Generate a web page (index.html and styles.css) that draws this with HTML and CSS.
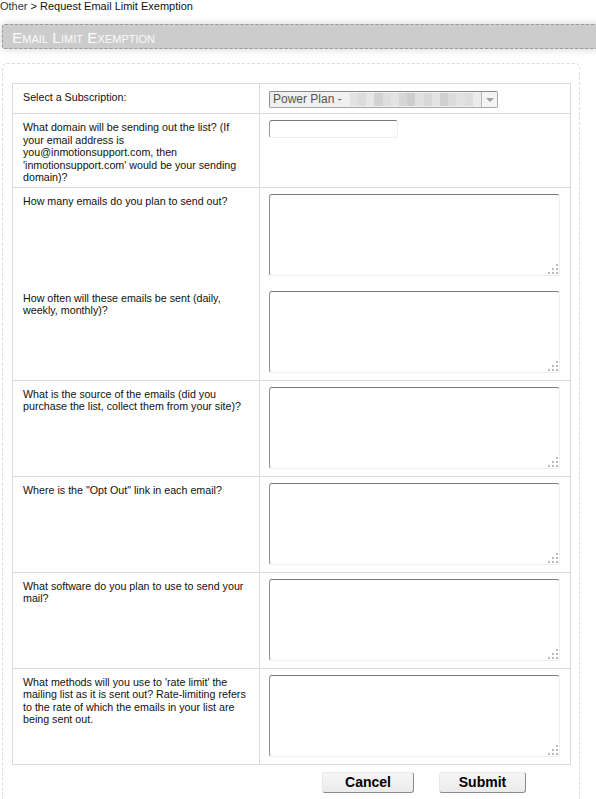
FILE: index.html
```html
<!DOCTYPE html>
<html>
<head>
<meta charset="utf-8">
<title>Email Limit Exemption</title>
<link rel="stylesheet" href="styles.css">
</head>
<body>
<div class="crumbs"><span class="crumb-parent">Other</span> &gt; Request Email Limit Exemption</div>
<div class="titlebar"><h1 class="title">Email Limit Exemption</h1></div>
<div class="panel">
  <table class="form">
    <tr>
      <td class="q">Select a Subscription:</td>
      <td class="a a-select">
        <div class="select">
          <span class="select-text">Power Plan -</span>
          <span class="blur">
            <i class="b1"></i><i class="b2"></i><i class="b3"></i><i class="b4"></i><i class="b5"></i><i class="b6"></i><i class="b7"></i><i class="b8"></i><i class="b9"></i><i class="b10"></i><i class="b11"></i><i class="b12"></i><i class="b13"></i><i class="b14"></i><i class="b15"></i><i class="b16"></i><i class="b17"></i>
          </span>
          <span class="select-btn"><span class="arrow"></span></span>
        </div>
      </td>
    </tr>
    <tr>
      <td class="q">What domain will be sending out the list? (If your email address is you@inmotionsupport.com, then 'inmotionsupport.com' would be your sending domain)?</td>
      <td class="a"><input class="text" type="text"></td>
    </tr>
    <tr>
      <td class="q">
        <div class="q-block">How many emails do you plan to send out?</div>
        <div>How often will these emails be sent (daily, weekly, monthly)?</div>
      </td>
      <td class="a">
        <textarea class="area area-first"></textarea>
        <textarea class="area"></textarea>
      </td>
    </tr>
    <tr>
      <td class="q">What is the source of the emails (did you purchase the list, collect them from your site)?</td>
      <td class="a"><textarea class="area"></textarea></td>
    </tr>
    <tr>
      <td class="q">Where is the "Opt Out" link in each email?</td>
      <td class="a"><textarea class="area"></textarea></td>
    </tr>
    <tr>
      <td class="q">What software do you plan to use to send your mail?</td>
      <td class="a"><textarea class="area"></textarea></td>
    </tr>
    <tr>
      <td class="q">What methods will you use to 'rate limit' the mailing list as it is sent out? Rate-limiting refers to the rate of which the emails in your list are being sent out.</td>
      <td class="a"><textarea class="area"></textarea></td>
    </tr>
  </table>
  <div class="actions">
    <button class="btn btn-cancel" type="button">Cancel</button>
    <button class="btn btn-submit" type="button">Submit</button>
  </div>
</div>
</body>
</html>
```

FILE: styles.css
```css
html {
  overflow: hidden;
}
body {
  margin: 0;
  font-family: "Liberation Sans", Arial, sans-serif;
  color: #000;
  background: #fff;
}
.crumbs {
  font-size: 11px;
  line-height: 12px;
  height: 13px;
  color: #111;
}
.crumb-parent {
  color: #333;
}
.titlebar {
  margin: 11px -20px 0 2px;
  height: 23px;
  background: #cccccc;
  border: 1px dashed #9a9a9a;
  border-radius: 3px;
  box-shadow: 0 0 9px rgba(0, 0, 0, 0.18);
  padding-left: 9px;
}
.title {
  margin: 0;
  font-size: 15.5px;
  font-weight: normal;
  font-variant: small-caps;
  line-height: 23px;
  padding-top: 1px;
  color: #fafafa;
}
.panel {
  margin: 14px 16px 0 2px;
  border: 1px dashed #dcdcdc;
  border-radius: 5px;
  padding: 19px 8px 60px 9px;
}
.form {
  border-collapse: collapse;
  width: 559px;
}
.form td {
  border: 1px solid #dadada;
  vertical-align: top;
}
.q {
  width: 226px;
  padding: 7px 10px 3px 10px;
  font-size: 10.7px;
  line-height: 12.5px;
  color: #111;
}
.a {
  padding: 6px 10px 7px 9px;
}
.a-select {
  padding-bottom: 5px;
}
.q-block {
  height: 97px;
}
.select {
  display: flex;
  align-items: stretch;
  width: 227px;
  height: 15px;
  border: 1px solid #a8a8a8;
  border-top-color: #8a8a8a;
  border-left-color: #8a8a8a;
  border-radius: 2px;
  background: #f0f0f0;
  margin-top: 1px;
}
.select-text {
  font-size: 12px;
  line-height: 15px;
  color: #555;
  padding-left: 3px;
  white-space: pre;
}
.blur {
  display: flex;
  flex: 1;
  margin: 1px 0;
}
.blur i {
  flex: 1;
}
.b1 { background: #f0f0f0; }
.b2 { background: #e2e2e2; }
.b3 { background: #dcdcdc; }
.b4 { background: #e6e6e6; }
.b5 { background: #d2d2d2; }
.b6 { background: #dedede; }
.b7 { background: #e4e4e4; }
.b8 { background: #d6d6d6; }
.b9 { background: #cdcdcd; }
.b10 { background: #e0e0e0; }
.b11 { background: #d8d8d8; }
.b12 { background: #e3e3e3; }
.b13 { background: #d0d0d0; }
.b14 { background: #dbdbdb; }
.b15 { background: #e1e1e1; }
.b16 { background: #dddddd; }
.b17 { background: #ebebeb; }
.select-btn {
  width: 15px;
  border-left: 1px solid #b5b5b5;
  background: #f3f3f3;
  display: flex;
  align-items: center;
  justify-content: center;
}
.arrow {
  width: 0;
  height: 0;
  border-left: 4px solid transparent;
  border-right: 4px solid transparent;
  border-top: 4px solid #a0a0a0;
  margin-top: 1px;
}
.text {
  display: block;
  box-sizing: border-box;
  width: 129px;
  height: 18px;
  margin: 0;
  padding: 0 3px;
  border: 1px solid #eeeeee;
  border-top-color: #7a7a7a;
  border-left-color: #9a9a9a;
  border-radius: 3px;
  background: #fff;
  font-family: "Liberation Sans", Arial, sans-serif;
  font-size: 12px;
}
.area {
  display: block;
  box-sizing: border-box;
  width: 291px;
  height: 82px;
  margin: 0;
  padding: 2px;
  resize: none;
  border: 1px solid #eeeeee;
  border-top-color: #7a7a7a;
  border-left-color: #909090;
  border-radius: 3px;
  font-family: "Liberation Sans", Arial, sans-serif;
  font-size: 12px;
  background:
    linear-gradient(#b9b9b9, #b9b9b9) right 1px bottom 9px / 2px 2px no-repeat,
    linear-gradient(#b9b9b9, #b9b9b9) right 1px bottom 5px / 2px 2px no-repeat,
    linear-gradient(#b9b9b9, #b9b9b9) right 5px bottom 5px / 2px 2px no-repeat,
    linear-gradient(#b9b9b9, #b9b9b9) right 1px bottom 1px / 2px 2px no-repeat,
    linear-gradient(#b9b9b9, #b9b9b9) right 5px bottom 1px / 2px 2px no-repeat,
    linear-gradient(#b9b9b9, #b9b9b9) right 9px bottom 1px / 2px 2px no-repeat,
    #fff;
}
.area-first {
  margin-bottom: 15px;
}
.actions {
  display: flex;
  gap: 25px;
  padding: 7px 0 0 310px;
}
.btn {
  height: 21px;
  margin: 0;
  padding: 0;
  border: 1px solid #e8e8e8;
  border-right-color: #8c8c8c;
  border-bottom-color: #8c8c8c;
  border-radius: 3px;
  background: linear-gradient(#f6f6f6, #ebebeb);
  font-family: "Liberation Sans", Arial, sans-serif;
  font-size: 14px;
  font-weight: bold;
  color: #000;
}
.btn-cancel {
  width: 92px;
}
.btn-submit {
  width: 87px;
}
```
